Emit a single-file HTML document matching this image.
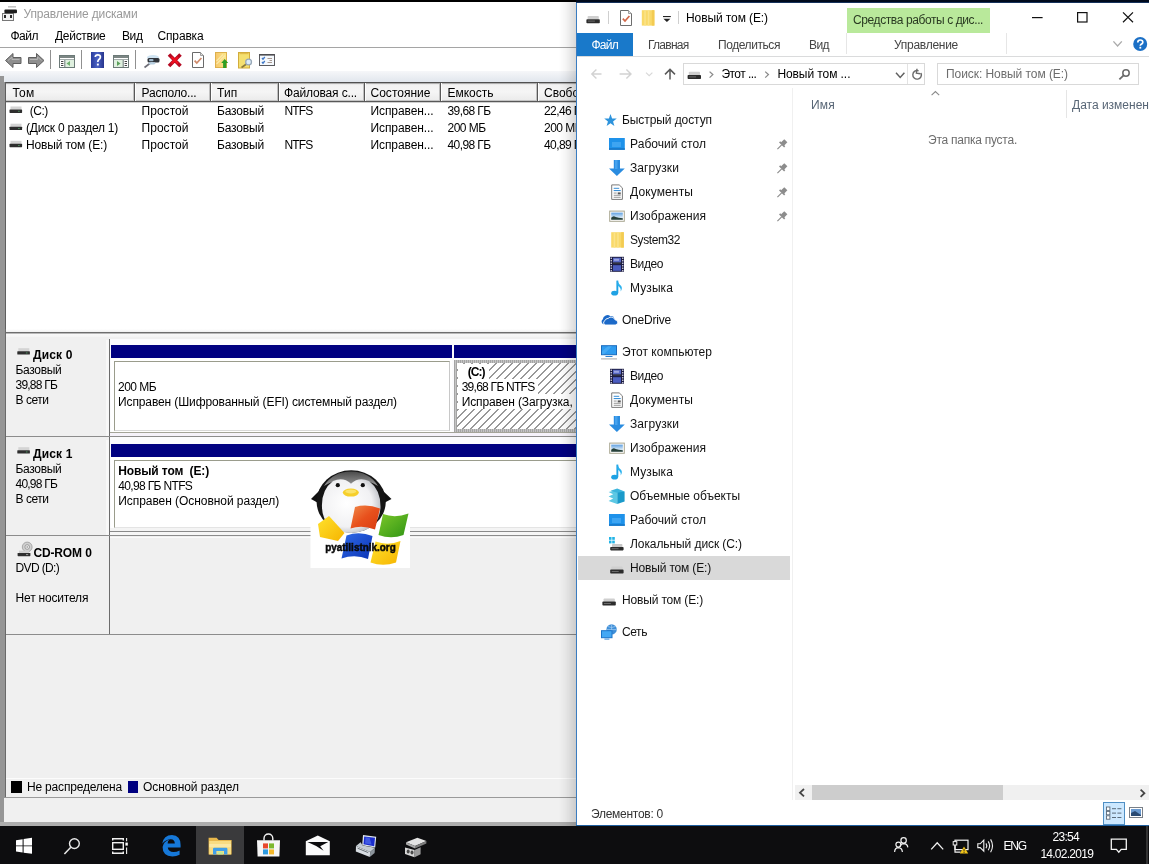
<!DOCTYPE html>
<html><head><meta charset="utf-8"><title>screen</title>
<style>
html,body{margin:0;padding:0;}
body{width:1149px;height:864px;overflow:hidden;position:relative;background:#fff;font-family:"Liberation Sans",sans-serif;}
.r{position:absolute;display:block;}
.t{position:absolute;white-space:pre;font-family:"Liberation Sans",sans-serif;}
</style></head><body><div id="root" style="position:absolute;left:0;top:0;width:1149px;height:864px;will-change:transform;overflow:hidden;">
<div class="r" style="left:0px;top:0px;width:1149px;height:2px;background:#000;"></div>
<div class="r" style="left:576px;top:0px;width:573px;height:2px;background:#000a1c;"></div>
<div class="r" style="left:0px;top:2px;width:577px;height:70px;background:#fff;"></div>
<span class="t" style="left:23.5px;top:7px;font-size:12px;line-height:14px;color:#999;letter-spacing:-0.161px;">Управление дисками</span>
<span class="t" style="left:10.5px;top:29px;font-size:12px;line-height:14px;color:#000;letter-spacing:-0.504px;">Файл</span>
<span class="t" style="left:55px;top:29px;font-size:12px;line-height:14px;color:#000;letter-spacing:-0.283px;">Действие</span>
<span class="t" style="left:122px;top:29px;font-size:12px;line-height:14px;color:#000;letter-spacing:-0.406px;">Вид</span>
<span class="t" style="left:157.5px;top:29px;font-size:12px;line-height:14px;color:#000;letter-spacing:-0.154px;">Справка</span>
<div class="r" style="left:0px;top:47px;width:577px;height:1px;background:#a5a5a5;"></div>
<div class="r" style="left:50px;top:50px;width:1px;height:19px;background:#909090;"></div>
<div class="r" style="left:81px;top:50px;width:1px;height:19px;background:#909090;"></div>
<div class="r" style="left:135px;top:50px;width:1px;height:19px;background:#909090;"></div>
<div class="r" style="left:0px;top:71px;width:577px;height:12px;background:linear-gradient(#f6f7f9,#dfe5ec);"></div>
<div class="r" style="left:0px;top:76px;width:5px;height:750px;background:#969696;"></div>
<div class="r" style="left:4px;top:76px;width:1px;height:6px;background:#e8ecf0;"></div>
<div class="r" style="left:5px;top:82px;width:572px;height:249px;background:#fff;"></div>
<div class="r" style="left:5px;top:82px;width:572px;height:1px;background:#505050;"></div>
<div class="r" style="left:5px;top:82px;width:1px;height:249px;background:#5e5e5e;"></div>
<div class="r" style="left:6px;top:83px;width:571px;height:18px;background:linear-gradient(#909090 0,#f2f2f2 9%,#f5f5f5 50%,#ececec 92%,#b0b0b0 100%);"></div>
<div class="r" style="left:6px;top:101px;width:571px;height:1px;background:#585858;"></div>
<div class="r" style="left:6px;top:102px;width:571px;height:1px;background:#d0d0d0;"></div>
<div class="r" style="left:133px;top:84px;width:1px;height:17px;background:#c0c0c0;"></div>
<div class="r" style="left:134px;top:83px;width:1px;height:18px;background:#585858;"></div>
<div class="r" style="left:135px;top:83px;width:1px;height:18px;background:#fdfdfd;"></div>
<div class="r" style="left:209px;top:84px;width:1px;height:17px;background:#c0c0c0;"></div>
<div class="r" style="left:210px;top:83px;width:1px;height:18px;background:#585858;"></div>
<div class="r" style="left:211px;top:83px;width:1px;height:18px;background:#fdfdfd;"></div>
<div class="r" style="left:277px;top:84px;width:1px;height:17px;background:#c0c0c0;"></div>
<div class="r" style="left:278px;top:83px;width:1px;height:18px;background:#585858;"></div>
<div class="r" style="left:279px;top:83px;width:1px;height:18px;background:#fdfdfd;"></div>
<div class="r" style="left:363px;top:84px;width:1px;height:17px;background:#c0c0c0;"></div>
<div class="r" style="left:364px;top:83px;width:1px;height:18px;background:#585858;"></div>
<div class="r" style="left:365px;top:83px;width:1px;height:18px;background:#fdfdfd;"></div>
<div class="r" style="left:439px;top:84px;width:1px;height:17px;background:#c0c0c0;"></div>
<div class="r" style="left:440px;top:83px;width:1px;height:18px;background:#585858;"></div>
<div class="r" style="left:441px;top:83px;width:1px;height:18px;background:#fdfdfd;"></div>
<div class="r" style="left:536px;top:84px;width:1px;height:17px;background:#c0c0c0;"></div>
<div class="r" style="left:537px;top:83px;width:1px;height:18px;background:#585858;"></div>
<div class="r" style="left:538px;top:83px;width:1px;height:18px;background:#fdfdfd;"></div>
<span class="t" style="left:12.5px;top:86px;font-size:12px;line-height:14px;color:#000;letter-spacing:0.224px;">Том</span>
<span class="t" style="left:141.5px;top:86px;font-size:12px;line-height:14px;color:#000;letter-spacing:-0.200px;">Располо...</span>
<span class="t" style="left:217px;top:86px;font-size:12px;line-height:14px;color:#000;letter-spacing:0.161px;">Тип</span>
<span class="t" style="left:284px;top:86px;font-size:12px;line-height:14px;color:#000;letter-spacing:-0.159px;">Файловая с...</span>
<span class="t" style="left:370.5px;top:86px;font-size:12px;line-height:14px;color:#000;letter-spacing:0.012px;">Состояние</span>
<span class="t" style="left:447.5px;top:86px;font-size:12px;line-height:14px;color:#000;letter-spacing:-0.009px;">Емкость</span>
<span class="t" style="left:544px;top:86px;font-size:12px;line-height:14px;color:#000;">Свобод</span>
<span class="t" style="left:29.8px;top:104px;font-size:12px;line-height:14px;color:#000;letter-spacing:-0.500px;">(C:)</span>
<span class="t" style="left:141.5px;top:104px;font-size:12px;line-height:14px;color:#000;letter-spacing:0.040px;">Простой</span>
<span class="t" style="left:217px;top:104px;font-size:12px;line-height:14px;color:#000;letter-spacing:-0.167px;">Базовый</span>
<span class="t" style="left:284.5px;top:104px;font-size:12px;line-height:14px;color:#000;letter-spacing:-0.836px;">NTFS</span>
<span class="t" style="left:370.5px;top:104px;font-size:12px;line-height:14px;color:#000;letter-spacing:-0.092px;">Исправен...</span>
<span class="t" style="left:447.5px;top:104px;font-size:12px;line-height:14px;color:#000;letter-spacing:-0.594px;">39,68 ГБ</span>
<span class="t" style="left:544px;top:104px;font-size:12px;line-height:14px;color:#000;letter-spacing:-0.594px;">22,46 ГБ</span>
<span class="t" style="left:26px;top:121px;font-size:12px;line-height:14px;color:#000;letter-spacing:-0.244px;">(Диск 0 раздел 1)</span>
<span class="t" style="left:141.5px;top:121px;font-size:12px;line-height:14px;color:#000;letter-spacing:0.040px;">Простой</span>
<span class="t" style="left:217px;top:121px;font-size:12px;line-height:14px;color:#000;letter-spacing:-0.167px;">Базовый</span>
<span class="t" style="left:370.5px;top:121px;font-size:12px;line-height:14px;color:#000;letter-spacing:-0.092px;">Исправен...</span>
<span class="t" style="left:447.5px;top:121px;font-size:12px;line-height:14px;color:#000;letter-spacing:-0.539px;">200 МБ</span>
<span class="t" style="left:544px;top:121px;font-size:12px;line-height:14px;color:#000;letter-spacing:-0.539px;">200 МБ</span>
<span class="t" style="left:26px;top:138px;font-size:12px;line-height:14px;color:#000;letter-spacing:-0.166px;">Новый том (E:)</span>
<span class="t" style="left:141.5px;top:138px;font-size:12px;line-height:14px;color:#000;letter-spacing:0.040px;">Простой</span>
<span class="t" style="left:217px;top:138px;font-size:12px;line-height:14px;color:#000;letter-spacing:-0.167px;">Базовый</span>
<span class="t" style="left:284.5px;top:138px;font-size:12px;line-height:14px;color:#000;letter-spacing:-0.836px;">NTFS</span>
<span class="t" style="left:370.5px;top:138px;font-size:12px;line-height:14px;color:#000;letter-spacing:-0.092px;">Исправен...</span>
<span class="t" style="left:447.5px;top:138px;font-size:12px;line-height:14px;color:#000;letter-spacing:-0.594px;">40,98 ГБ</span>
<span class="t" style="left:544px;top:138px;font-size:12px;line-height:14px;color:#000;letter-spacing:-0.594px;">40,89 ГБ</span>
<div class="r" style="left:6px;top:329px;width:571px;height:8px;background:linear-gradient(#fff 0,#f4f4f4 30%,#e8e8e8 45%,#f8f8f8 62%,#f4f4f4 100%);"></div>
<div class="r" style="left:5px;top:332px;width:572px;height:1px;background:#6e6e6e;"></div>
<div class="r" style="left:5px;top:333px;width:572px;height:1px;background:#b8b8b8;"></div>
<div class="r" style="left:5px;top:337px;width:572px;height:441px;background:#f0f0f0;"></div>
<div class="r" style="left:5px;top:329px;width:1px;height:469px;background:#6a6a6a;"></div>
<div class="r" style="left:110px;top:339px;width:467px;height:198px;background:#fbfbfd;"></div>
<div class="r" style="left:106px;top:340px;width:3px;height:97px;background:#f8f8f8;"></div>
<div class="r" style="left:109px;top:339px;width:1px;height:296px;background:#6c6c6c;"></div>
<div class="r" style="left:6px;top:436px;width:571px;height:1px;background:#8c8c8c;"></div>
<div class="r" style="left:110px;top:432px;width:467px;height:1px;background:#a4a498;"></div>
<div class="r" style="left:110px;top:433px;width:467px;height:3px;background:#f5f2fa;"></div>
<span class="t" style="left:33px;top:348px;font-size:12px;line-height:14px;color:#000;letter-spacing:0.146px;font-weight:bold;">Диск 0</span>
<span class="t" style="left:15.5px;top:363px;font-size:12px;line-height:14px;color:#000;letter-spacing:-0.310px;">Базовый</span>
<span class="t" style="left:15.5px;top:378px;font-size:12px;line-height:14px;color:#000;letter-spacing:-0.781px;">39,88 ГБ</span>
<span class="t" style="left:15.5px;top:393px;font-size:12px;line-height:14px;color:#000;letter-spacing:-0.469px;">В сети</span>
<div class="r" style="left:111px;top:345px;width:341px;height:13px;background:#000080;"></div>
<div class="r" style="left:111px;top:358px;width:341px;height:74px;background:#fff;"></div>
<div class="r" style="left:114px;top:361px;width:336px;height:70px;background:transparent;border:1px solid #9a9c8c;border-right-color:#c8c8c8;border-bottom-color:#d8d8d8;box-sizing:border-box;"></div>
<span class="t" style="left:118px;top:380px;font-size:12px;line-height:14px;color:#000;letter-spacing:-0.539px;">200 МБ</span>
<span class="t" style="left:118px;top:395px;font-size:12px;line-height:14px;color:#000;letter-spacing:-0.113px;">Исправен (Шифрованный (EFI) системный раздел)</span>
<div class="r" style="left:454px;top:345px;width:123px;height:13px;background:#000080;"></div>
<div class="r" style="left:454px;top:358px;width:123px;height:74px;background:#fff;"></div>
<div class="r" style="left:454px;top:360px;width:123px;height:72px;background:#b4b4b4;background:repeating-linear-gradient(90deg,#a4a4a4 0,#a4a4a4 1px,#c4c4c4 1px,#c4c4c4 2px);"></div>
<div class="r" style="left:457px;top:363px;width:120px;height:66px;background:#fff;background:repeating-linear-gradient(135deg,#fff 0,#fff 4.9px,#989898 4.9px,#989898 5.657px);"></div>
<div class="r" style="left:458px;top:364px;width:31px;height:15px;background:#fff;"></div>
<div class="r" style="left:458px;top:379px;width:80px;height:15px;background:#fff;"></div>
<div class="r" style="left:458px;top:394px;width:119px;height:15px;background:#fff;"></div>
<span class="t" style="left:467.8px;top:365px;font-size:12px;line-height:14px;color:#000;letter-spacing:-0.964px;font-weight:bold;">(C:)</span>
<span class="t" style="left:461.7px;top:380px;font-size:12px;line-height:14px;color:#000;letter-spacing:-0.739px;">39,68 ГБ NTFS</span>
<span class="t" style="left:461.7px;top:395px;font-size:12px;line-height:14px;color:#000;letter-spacing:-0.12px;">Исправен (Загрузка, ф</span>
<div class="r" style="left:106px;top:440px;width:3px;height:96px;background:#f8f8f8;"></div>
<div class="r" style="left:6px;top:535px;width:571px;height:1px;background:#8c8c8c;"></div>
<div class="r" style="left:110px;top:528px;width:467px;height:3px;background:#f4f4f4;"></div>
<div class="r" style="left:110px;top:531px;width:467px;height:1px;background:#8a8a8a;"></div>
<div class="r" style="left:110px;top:532px;width:467px;height:3px;background:#f6f6f6;"></div>
<span class="t" style="left:33px;top:447px;font-size:12px;line-height:14px;color:#000;letter-spacing:0.146px;font-weight:bold;">Диск 1</span>
<span class="t" style="left:15.5px;top:462px;font-size:12px;line-height:14px;color:#000;letter-spacing:-0.310px;">Базовый</span>
<span class="t" style="left:15.5px;top:477px;font-size:12px;line-height:14px;color:#000;letter-spacing:-0.781px;">40,98 ГБ</span>
<span class="t" style="left:15.5px;top:492px;font-size:12px;line-height:14px;color:#000;letter-spacing:-0.469px;">В сети</span>
<div class="r" style="left:111px;top:444px;width:466px;height:13px;background:#000080;"></div>
<div class="r" style="left:111px;top:457px;width:466px;height:71px;background:#fff;"></div>
<div class="r" style="left:114px;top:460px;width:463px;height:68px;background:transparent;border:1px solid #9a9c8c;border-right:0;border-bottom-color:#e4e4e4;box-sizing:border-box;"></div>
<span class="t" style="left:118.2px;top:464px;font-size:12px;line-height:14px;color:#000;letter-spacing:-0.123px;font-weight:bold;">Новый том  (E:)</span>
<span class="t" style="left:118.2px;top:479px;font-size:12px;line-height:14px;color:#000;letter-spacing:-0.647px;">40,98 ГБ NTFS</span>
<span class="t" style="left:118.2px;top:494px;font-size:12px;line-height:14px;color:#000;letter-spacing:-0.055px;">Исправен (Основной раздел)</span>
<div class="r" style="left:110px;top:536px;width:467px;height:99px;background:#f0f0f0;"></div>
<div class="r" style="left:110px;top:537px;width:467px;height:1px;background:#fafafa;"></div>
<div class="r" style="left:6px;top:634px;width:571px;height:1px;background:#8c8c8c;"></div>
<span class="t" style="left:33.4px;top:546px;font-size:12px;line-height:14px;color:#000;letter-spacing:-0.130px;font-weight:bold;">CD-ROM 0</span>
<span class="t" style="left:15.6px;top:561px;font-size:12px;line-height:14px;color:#000;letter-spacing:-0.646px;">DVD (D:)</span>
<span class="t" style="left:15.6px;top:591px;font-size:12px;line-height:14px;color:#000;letter-spacing:-0.193px;">Нет носителя</span>
<div class="r" style="left:6px;top:778px;width:571px;height:19px;background:#f0f0f0;"></div>
<div class="r" style="left:6px;top:778px;width:571px;height:1px;background:#fcfcfc;"></div>
<div class="r" style="left:11px;top:781px;width:11px;height:12px;background:#000;"></div>
<span class="t" style="left:27px;top:780px;font-size:12px;line-height:14px;color:#000;letter-spacing:-0.191px;">Не распределена</span>
<div class="r" style="left:128px;top:781px;width:10px;height:12px;background:#000080;"></div>
<span class="t" style="left:143px;top:780px;font-size:12px;line-height:14px;color:#000;letter-spacing:-0.072px;">Основной раздел</span>
<div class="r" style="left:5px;top:797px;width:572px;height:1px;background:#9a9a9a;"></div>
<div class="r" style="left:4px;top:798px;width:573px;height:24px;background:#f0f0f0;"></div>
<div class="r" style="left:0px;top:822px;width:577px;height:4px;background:#adadad;"></div>
<svg class="r" style="left:0px;top:0px" width="577" height="700" viewBox="0 0 577 700"><rect x="8" y="6" width="8" height="1.6" fill="#c4c4c4"/><rect x="2.5" y="13.5" width="11" height="7" fill="#f2f2f2" stroke="#777" stroke-width="1"/><rect x="4" y="15" width="2" height="3" fill="#2a2a2a"/><rect x="10" y="15" width="2" height="3" fill="#2a2a2a"/><rect x="4.4" y="9.4" width="12.6" height="3.8" rx="1" fill="#1e1e1e"/><path d="M5.5,60.5 L13,53.5 L13,57.5 L21,57.5 L21,63.5 L13,63.5 L13,67.5 Z" fill="#8e8e8e" stroke="#5e5e5e" stroke-width="1"/><path d="M8,60.5 L12,57 L12,59.5 L19.5,59.5" fill="none" stroke="#b4b4b4" stroke-width="1"/><path d="M44,60.5 L36.5,53.5 L36.5,57.5 L28.5,57.5 L28.5,63.5 L36.5,63.5 L36.5,67.5 Z" fill="#8e8e8e" stroke="#5e5e5e" stroke-width="1"/><path d="M30,59.5 L37.5,59.5 L37.5,57 L41.5,60.5" fill="none" stroke="#b4b4b4" stroke-width="1"/><rect x="59.5" y="55.5" width="15" height="12" fill="#fff" stroke="#6c7a78" stroke-width="1"/><rect x="60" y="56" width="14" height="2" fill="#7c8684"/><rect x="60" y="59" width="14" height="0.8" fill="#8c9896"/><rect x="65" y="60" width="9" height="7" fill="#dff0df"/><rect x="64.3" y="60" width="1" height="7" fill="#6c7a78"/><path d="M70,61 L70,66 L66.5,63.5 Z" fill="#6fb06f"/><rect x="61" y="61" width="2.4" height="1" fill="#444"/><rect x="61" y="63" width="2.4" height="1" fill="#444"/><rect x="61" y="65" width="2.4" height="1" fill="#444"/><defs><linearGradient id="hg" x1="0" x2="1"><stop offset="0" stop-color="#2a3c9c"/><stop offset=".5" stop-color="#4a62c4"/><stop offset="1" stop-color="#27358c"/></linearGradient></defs><rect x="91" y="52" width="13" height="16" fill="url(#hg)"/><path d="M95.3,57 Q95.3,54.8 97.8,54.8 Q100.4,54.8 100.4,57 Q100.4,58.6 98.6,59.8 Q97.8,60.6 97.8,62" fill="none" stroke="#fff" stroke-width="1.7"/><rect x="96.9" y="63.6" width="1.9" height="1.9" fill="#fff"/><rect x="113.5" y="55.5" width="15" height="12" fill="#fff" stroke="#6c7a78" stroke-width="1"/><rect x="114" y="56" width="14" height="2" fill="#7c8684"/><rect x="114" y="59" width="14" height="0.8" fill="#8c9896"/><rect x="114" y="60" width="9" height="7" fill="#dff0df"/><rect x="122.7" y="60" width="1" height="7" fill="#6c7a78"/><path d="M117,61 L117,66 L120.5,63.5 Z" fill="#5aa05a"/><rect x="124.6" y="61" width="2.4" height="1" fill="#444"/><rect x="124.6" y="63" width="2.4" height="1" fill="#444"/><rect x="124.6" y="65" width="2.4" height="1" fill="#444"/><path d="M144.5,67.5 L151,62.5" stroke="#6e6e78" stroke-width="1.6" fill="none"/><ellipse cx="153" cy="57.5" rx="6" ry="2.6" fill="#cfe3f1"/><rect x="147.5" y="58" width="12" height="4.4" rx="1.5" fill="#30343a"/><rect x="149" y="59" width="4.5" height="2.2" rx="1" fill="#9fb8cc"/><ellipse cx="152" cy="63.3" rx="3.5" ry="1.2" fill="#b8cfe0"/><path d="M169.0,54.5 L180.5,66.0 M180.5,54.5 L169.0,66.0" stroke="#b50a22" stroke-width="3.6" fill="none"/><path d="M171.5,57.0 L178.0,63.5 M178.0,57.0 L171.5,63.5" stroke="#f01020" stroke-width="2" fill="none"/><path d="M192.5,52.5 L200.5,52.5 L203.5,55.5 L203.5,67.5 L192.5,67.5 Z" fill="#fff" stroke="#6a6a6a" stroke-width="1"/><path d="M200.5,52.5 L200.5,55.5 L203.5,55.5" fill="#ddd" stroke="#8a8a8a" stroke-width="0.8"/><path d="M194.6,60.6 L196.8,63 L201.4,58" fill="none" stroke="#cf8a6a" stroke-width="1.7"/><defs><linearGradient id="fg1" x1="0" x2="1"><stop offset="0" stop-color="#f7c66a"/><stop offset="1" stop-color="#fbe88a"/></linearGradient></defs><rect x="215.5" y="52.5" width="11" height="15" fill="url(#fg1)" stroke="#ddb04c" stroke-width="1"/><path d="M216.5,61 L223,54.5 M216.5,64 L225,55.5" stroke="#fbe9a8" stroke-width="1.2" fill="none"/><path d="M224.7,59 L228.2,63 L226.3,63 L226.3,68 L223.1,68 L223.1,63 L221.2,63 Z" fill="#2f9e24"/><rect x="238.5" y="52.5" width="11" height="15.5" fill="#f4e070" stroke="#d2ac3c" stroke-width="1"/><rect x="239.5" y="53" width="9" height="1.2" fill="#e2bc4a"/><path d="M241.5,67.5 L246.5,64" stroke="#8c7a3a" stroke-width="1.6" fill="none"/><circle cx="248.6" cy="62" r="2.9" fill="#dcecf8" stroke="#98a8b8" stroke-width="1.3"/><rect x="259.5" y="54.5" width="15" height="11" fill="#f4f8fc" stroke="#5a5a5e" stroke-width="1"/><rect x="259.5" y="54" width="15" height="1.6" fill="#4c4c50"/><path d="M262,58 L263,59.2 L264.8,57" stroke="#3f77c8" stroke-width="1.3" fill="none"/><path d="M262,62 L263,63.2 L264.8,61" stroke="#3f77c8" stroke-width="1.3" fill="none"/><rect x="267.5" y="58" width="4.5" height="1" fill="#a89890"/><rect x="269.5" y="60" width="2.5" height="1" fill="#a89890"/><rect x="267.5" y="62" width="4.5" height="1" fill="#a89890"/><rect x="10.5" y="106.5" width="11" height="3.2" fill="#d4d4d4"/><rect x="9.5" y="109.5" width="12.6" height="3.4" rx="0.6" fill="#2e2e2e"/><rect x="18.1" y="110.8" width="1.6" height="0.9" fill="#4f9a62"/><rect x="10.5" y="123.7" width="11" height="3.2" fill="#d4d4d4"/><rect x="9.5" y="126.7" width="12.6" height="3.4" rx="0.6" fill="#2e2e2e"/><rect x="18.1" y="128.0" width="1.6" height="0.9" fill="#4f9a62"/><rect x="10.5" y="140.8" width="11" height="3.2" fill="#d4d4d4"/><rect x="9.5" y="143.8" width="12.6" height="3.4" rx="0.6" fill="#2e2e2e"/><rect x="18.1" y="145.10000000000002" width="1.6" height="0.9" fill="#4f9a62"/><rect x="18.3" y="348.2" width="11" height="3.2" fill="#d4d4d4"/><rect x="17.3" y="351.2" width="12.6" height="3.4" rx="0.6" fill="#2e2e2e"/><rect x="25.9" y="352.5" width="1.6" height="0.9" fill="#4f9a62"/><rect x="18.3" y="447.2" width="11" height="3.2" fill="#d4d4d4"/><rect x="17.3" y="450.2" width="12.6" height="3.4" rx="0.6" fill="#2e2e2e"/><rect x="25.9" y="451.5" width="1.6" height="0.9" fill="#4f9a62"/><circle cx="27.200000000000003" cy="547" r="4.9" fill="#d0d0d0" stroke="#9a9a9a" stroke-width="0.8"/><circle cx="27.200000000000003" cy="547" r="2.3" fill="#eee" stroke="#8c8c8c" stroke-width="0.8"/><circle cx="27.200000000000003" cy="547" r="0.8" fill="#888"/><rect x="19.0" y="550.6" width="10" height="2.6" fill="#d0d0d0"/><rect x="17.6" y="553" width="12.8" height="3.2" rx="0.6" fill="#2e2e2e"/><rect x="26.0" y="554.1" width="2.2" height="1" fill="#9a9a9a"/><defs><radialGradient id="pb" cx=".42" cy=".45" r=".62"><stop offset="0" stop-color="#ffffff"/><stop offset=".7" stop-color="#f1f1f3"/><stop offset="1" stop-color="#b9bcc2"/></radialGradient><linearGradient id="ph" x1="0" y1="0" x2="0" y2="1"><stop offset="0" stop-color="#4a4a4a"/><stop offset="1" stop-color="#9a9a9a"/></linearGradient><linearGradient id="pr" x1="0" y1="0" x2="1" y2="1"><stop offset="0" stop-color="#f08a4a"/><stop offset=".5" stop-color="#e8501c"/><stop offset="1" stop-color="#d83a10"/></linearGradient><linearGradient id="pgn" x1="0" y1="0" x2="1" y2="1"><stop offset="0" stop-color="#7cc82a"/><stop offset="1" stop-color="#2f9414"/></linearGradient><linearGradient id="pbl" x1="0" y1="0" x2="1" y2="1"><stop offset="0" stop-color="#2f6ae8"/><stop offset="1" stop-color="#0c34b4"/></linearGradient><linearGradient id="py" x1="0" y1="0" x2="1" y2="1"><stop offset="0" stop-color="#ffe22e"/><stop offset="1" stop-color="#f6b400"/></linearGradient></defs><rect x="310.5" y="463" width="99.5" height="105" fill="#fff"/><path d="M321,489 L311,499 L320,504 Z" fill="#111"/><path d="M381,489 L391.5,499 L382,504 Z" fill="#111"/><ellipse cx="351.2" cy="501.5" rx="34.6" ry="31.2" fill="#151515"/><path d="M324,486 Q333,471.5 351,471.5 Q369,471.5 378,486 Q364,477 351,483.5 Q338,477 324,486 Z" fill="url(#ph)"/><path d="M322,508 Q321,490 333,481 Q343,476.5 351,483.5 Q359,476.5 369,481 Q381,490 380.5,508 Q379,531 351,533 Q323,531 322,508 Z" fill="url(#pb)"/><circle cx="337.8" cy="485.2" r="2.1" fill="#111"/><circle cx="362.8" cy="485.2" r="2.1" fill="#111"/><ellipse cx="350.8" cy="492.6" rx="8" ry="4" fill="#f6cf2a"/><ellipse cx="350.8" cy="491.4" rx="5.5" ry="2" fill="#fbe36a"/><path d="M318,524 L329,516 L344.5,533 L338,541 L320,537 Z" fill="url(#py)"/><path d="M355,507 Q367,503.5 380,508.5 L375,529.5 Q362,524.5 350.5,528.5 Z" fill="url(#pr)"/><path d="M383,514 Q395,518.5 408.5,513.5 L403.5,535 Q391,539.5 378.5,535 Z" fill="url(#pgn)"/><path d="M346.5,535.5 Q359,531 372.5,536 L368,559 Q355,554 341.5,558.5 Z" fill="url(#pbl)"/><path d="M375.5,541.5 Q388,546 400.5,541 L396,562.5 Q383,567 370.5,562.5 Z" fill="url(#py)"/><g transform="translate(325.2,551.4) scale(1,0.78)"><text x="0" y="0" font-family="Liberation Sans, sans-serif" font-weight="bold" font-size="15" textLength="70.6" lengthAdjust="spacingAndGlyphs" fill="#0a0a0a" stroke="#0a0a0a" stroke-width="0.7">pyatilistnik.org</text></g></svg>
<div class="r" style="left:559px;top:2px;width:17px;height:824px;background:linear-gradient(90deg,rgba(0,0,0,0) 0,rgba(0,0,0,0.04) 40%,rgba(0,0,0,0.15) 100%);"></div>
<div class="r" style="left:576px;top:2px;width:573px;height:824px;background:#fff;"></div>
<div class="r" style="left:576px;top:2px;width:1px;height:824px;background:#3a7cc0;"></div>
<div class="r" style="left:576px;top:825px;width:573px;height:1px;background:#1f5f9f;"></div>
<div class="r" style="left:576px;top:2px;width:573px;height:1px;background:#16325c;"></div>
<span class="t" style="left:686px;top:11px;font-size:12px;line-height:14px;color:#000;letter-spacing:-0.095px;">Новый том (E:)</span>
<div class="r" style="left:847px;top:8px;width:143px;height:25px;background:#b9e99b;"></div>
<span class="t" style="left:853px;top:13px;font-size:12px;line-height:14px;color:#2a3a22;letter-spacing:-0.401px;">Средства работы с дис...</span>
<div class="r" style="left:577px;top:33px;width:56px;height:23px;background:#1979ca;"></div>
<span class="t" style="left:591.5px;top:38px;font-size:12px;line-height:14px;color:#fff;letter-spacing:-0.754px;">Файл</span>
<span class="t" style="left:648px;top:38px;font-size:12px;line-height:14px;color:#444;letter-spacing:-0.741px;">Главная</span>
<span class="t" style="left:718px;top:38px;font-size:12px;line-height:14px;color:#444;letter-spacing:-0.427px;">Поделиться</span>
<span class="t" style="left:809px;top:38px;font-size:12px;line-height:14px;color:#444;letter-spacing:-0.573px;">Вид</span>
<span class="t" style="left:894px;top:38px;font-size:12px;line-height:14px;color:#444;letter-spacing:-0.272px;">Управление</span>
<div class="r" style="left:577px;top:56px;width:572px;height:1px;background:#dadbdc;"></div>
<div class="r" style="left:846px;top:33px;width:1px;height:21px;background:#e6e6e6;"></div>
<div class="r" style="left:1006px;top:33px;width:1px;height:21px;background:#e6e6e6;"></div>
<div class="r" style="left:683px;top:63px;width:242px;height:22px;background:#fff;border:1px solid #d9d9d9;box-sizing:border-box;"></div>
<div class="r" style="left:907px;top:64px;width:1px;height:20px;background:#e3e3e3;"></div>
<span class="t" style="left:721.4px;top:67px;font-size:12px;line-height:14px;color:#000;letter-spacing:-0.529px;">Этот ...</span>
<span class="t" style="left:777.4px;top:67px;font-size:12px;line-height:14px;color:#000;letter-spacing:-0.077px;">Новый том ...</span>
<div class="r" style="left:937px;top:63px;width:202px;height:22px;background:#fff;border:1px solid #d9d9d9;box-sizing:border-box;"></div>
<span class="t" style="left:946px;top:67px;font-size:12px;line-height:14px;color:#6d6d6d;letter-spacing:-0.060px;">Поиск: Новый том (E:)</span>
<div class="r" style="left:792px;top:88px;width:1px;height:712px;background:#f0f0f0;"></div>
<div class="r" style="left:578px;top:556px;width:212px;height:24px;background:#d9d9d9;"></div>
<span class="t" style="left:622px;top:113px;font-size:12px;line-height:14px;color:#111;letter-spacing:-0.081px;">Быстрый доступ</span>
<span class="t" style="left:630px;top:137px;font-size:12px;line-height:14px;color:#111;letter-spacing:0.056px;">Рабочий стол</span>
<span class="t" style="left:630px;top:161px;font-size:12px;line-height:14px;color:#111;letter-spacing:0.088px;">Загрузки</span>
<span class="t" style="left:630px;top:185px;font-size:12px;line-height:14px;color:#111;letter-spacing:0.127px;">Документы</span>
<span class="t" style="left:630px;top:209px;font-size:12px;line-height:14px;color:#111;letter-spacing:0.053px;">Изображения</span>
<span class="t" style="left:630px;top:233px;font-size:12px;line-height:14px;color:#111;letter-spacing:-0.420px;">System32</span>
<span class="t" style="left:630px;top:257px;font-size:12px;line-height:14px;color:#111;letter-spacing:-0.412px;">Видео</span>
<span class="t" style="left:630px;top:281px;font-size:12px;line-height:14px;color:#111;letter-spacing:0.091px;">Музыка</span>
<span class="t" style="left:622px;top:313px;font-size:12px;line-height:14px;color:#111;letter-spacing:-0.211px;">OneDrive</span>
<span class="t" style="left:622px;top:345px;font-size:12px;line-height:14px;color:#111;letter-spacing:0.019px;">Этот компьютер</span>
<span class="t" style="left:630px;top:369px;font-size:12px;line-height:14px;color:#111;letter-spacing:-0.412px;">Видео</span>
<span class="t" style="left:630px;top:393px;font-size:12px;line-height:14px;color:#111;letter-spacing:0.127px;">Документы</span>
<span class="t" style="left:630px;top:417px;font-size:12px;line-height:14px;color:#111;letter-spacing:0.088px;">Загрузки</span>
<span class="t" style="left:630px;top:441px;font-size:12px;line-height:14px;color:#111;letter-spacing:0.053px;">Изображения</span>
<span class="t" style="left:630px;top:465px;font-size:12px;line-height:14px;color:#111;letter-spacing:0.091px;">Музыка</span>
<span class="t" style="left:630px;top:489px;font-size:12px;line-height:14px;color:#111;letter-spacing:-0.021px;">Объемные объекты</span>
<span class="t" style="left:630px;top:513px;font-size:12px;line-height:14px;color:#111;letter-spacing:0.056px;">Рабочий стол</span>
<span class="t" style="left:630px;top:537px;font-size:12px;line-height:14px;color:#111;letter-spacing:-0.082px;">Локальный диск (C:)</span>
<span class="t" style="left:630px;top:561px;font-size:12px;line-height:14px;color:#111;letter-spacing:-0.166px;">Новый том (E:)</span>
<span class="t" style="left:622px;top:593px;font-size:12px;line-height:14px;color:#111;letter-spacing:-0.166px;">Новый том (E:)</span>
<span class="t" style="left:622px;top:625px;font-size:12px;line-height:14px;color:#111;letter-spacing:-0.426px;">Сеть</span>
<span class="t" style="left:811px;top:98px;font-size:12px;line-height:14px;color:#586676;letter-spacing:0.208px;">Имя</span>
<span class="t" style="left:1072px;top:98px;font-size:12px;line-height:14px;color:#586676;">Дата изменения</span>
<div class="r" style="left:1066px;top:90px;width:1px;height:28px;background:#e5e5e5;"></div>
<span class="t" style="left:928px;top:133px;font-size:12px;line-height:14px;color:#6d6d6d;letter-spacing:-0.245px;">Эта папка пуста.</span>
<div class="r" style="left:795px;top:785px;width:354px;height:15px;background:#f0f0f0;"></div>
<div class="r" style="left:812px;top:785px;width:191px;height:15px;background:#cdcdcd;"></div>
<span class="t" style="left:591px;top:807px;font-size:12px;line-height:14px;color:#333;letter-spacing:-0.268px;">Элементов: 0</span>
<div class="r" style="left:0px;top:826px;width:1149px;height:38px;background:#0d0d0f;"></div>
<div class="r" style="left:196px;top:826px;width:48px;height:38px;background:#3a3a3c;"></div>
<span class="t" style="left:1052.6px;top:830px;font-size:12px;line-height:14px;color:#fff;letter-spacing:-0.726px;">23:54</span>
<span class="t" style="left:1040.4px;top:847px;font-size:12px;line-height:14px;color:#fff;letter-spacing:-0.736px;">14.02.2019</span>
<span class="t" style="left:1003.6px;top:839px;font-size:12px;line-height:14px;color:#fff;letter-spacing:-1.272px;">ENG</span>
<svg class="r" style="left:577px;top:0px" width="572" height="826" viewBox="577 0 572 826"><rect x="587.6" y="16" width="11.2" height="3.4" rx="0.8" fill="#cfcfcf"/><rect x="586.4" y="19.2" width="13.4" height="4" rx="0.8" fill="#2c2c2c"/><rect x="587.9" y="20.6" width="7" height="1" fill="#6a6a6a"/><path d="M620.5,10.5 L628.5,10.5 L631.5,13.5 L631.5,25.5 L620.5,25.5 Z" fill="#fff" stroke="#6e6e6e" stroke-width="1"/><path d="M628.5,10.5 L628.5,13.5 L631.5,13.5" fill="#e4e4e4" stroke="#8a8a8a" stroke-width="0.8"/><path d="M622.8,18.6 L625,21 L629.4,16" fill="none" stroke="#d2694a" stroke-width="1.7"/><rect x="641.8" y="10.2" width="12.6" height="15.4" fill="#f9d969"/><rect x="651.8" y="10.2" width="2.6" height="15.4" fill="#f3cb52"/><rect x="644.3" y="10.2" width="1.5" height="15.4" fill="#fbe38a"/><rect x="647.8" y="10.2" width="1.5" height="15.4" fill="#fbe38a"/><rect x="663" y="16" width="7.8" height="1.1" fill="#222"/><path d="M663.4,18.8 L670.4,18.8 L666.9,22 Z" fill="#222"/><rect x="608" y="11" width="1" height="13" fill="#cfcfcf"/><rect x="678" y="11" width="1" height="13" fill="#cfcfcf"/><rect x="1032" y="17" width="10.6" height="1.2" fill="#111"/><rect x="1077.6" y="12.6" width="9.4" height="9.4" fill="none" stroke="#111" stroke-width="1.2"/><path d="M1123,12.4 L1133,22.2 M1133,12.4 L1123,22.2" stroke="#111" stroke-width="1.2"/><path d="M1113.4,41.4 L1117.6000000000001,46.0 L1121.8000000000002,41.4" fill="none" stroke="#ababab" stroke-width="1.4"/><circle cx="1140.2" cy="44" r="7" fill="#1c70c6"/><path d="M1137.8,42.4 Q1137.8,40 1140.2,40 Q1142.8,40 1142.8,42.2 Q1142.8,43.6 1141.0,44.4 Q1140.3,44.9 1140.3,45.8" fill="none" stroke="#fff" stroke-width="1.7"/><rect x="1139.4" y="46.8" width="1.8" height="1.8" fill="#fff"/><path d="M601.5,74 L591.8,74 M596.4,69.4 L591.8,74 L596.4,78.6" fill="none" stroke="#d2d2d2" stroke-width="1.4"/><path d="M619.6,74 L631.0,74 M626.4,69.4 L631.0,74 L626.4,78.6" fill="none" stroke="#d2d2d2" stroke-width="1.4"/><path d="M646,72.6 L649.2,75.6 L652.4,72.6" fill="none" stroke="#d8d8d8" stroke-width="1.2"/><path d="M670.0,79.6 L670.0,69.39999999999999 M665.0,74.39999999999999 L670.0,69.39999999999999 L675.0,74.39999999999999" fill="none" stroke="#5a5a5a" stroke-width="1.5"/><rect x="688.8000000000001" y="71.8" width="11.2" height="3.4" rx="0.8" fill="#cfcfcf"/><rect x="687.6" y="75.0" width="13.4" height="4" rx="0.8" fill="#2c2c2c"/><rect x="689.1" y="76.39999999999999" width="7" height="1" fill="#6a6a6a"/><path d="M709.6,71.6 L712.8000000000001,74.6 L709.6,77.6" fill="none" stroke="#8a8a8a" stroke-width="1.3"/><path d="M765.2,71.6 L768.4000000000001,74.6 L765.2,77.6" fill="none" stroke="#8a8a8a" stroke-width="1.3"/><path d="M896,72.8 L900.2,77.39999999999999 L904.4,72.8" fill="none" stroke="#606060" stroke-width="1.5"/><path d="M918.6,70.8 A4.3,4.3 0 1 0 921,73.0" fill="none" stroke="#6a6a6a" stroke-width="1.4"/><path d="M916.6,68.8 L916.6,73.19999999999999 L920.8,73.19999999999999" fill="none" stroke="#6a6a6a" stroke-width="1.4" transform="rotate(8 917 71.6)"/><circle cx="1126.0" cy="73.0" r="3.2" fill="none" stroke="#6a6a6a" stroke-width="1.5"/><path d="M1123.6,75.4 L1119.3999999999999,79.4" stroke="#6a6a6a" stroke-width="1.8"/><path d="M931.6,95.19999999999999 L935.4,91.6 L939.2,95.19999999999999" fill="none" stroke="#8a8a8a" stroke-width="1.1"/><polygon points="610.50,114.00 612.09,118.42 616.78,118.56 613.07,121.43 614.38,125.94 610.50,123.30 606.62,125.94 607.93,121.43 604.22,118.56 608.91,118.42" fill="#2d93dc"/><rect x="609" y="138" width="15.8" height="11.8" fill="#1e92ea"/><rect x="609" y="148.2" width="15.8" height="1.6" fill="#1877c8"/><rect x="612" y="142" width="9" height="5" fill="#3ea5f2"/><path d="M613.8,160 L620,160 L620,168.4 L624.8,168.4 L616.9,176 L609,168.4 L613.8,168.4 Z" fill="#2a8ce0"/><rect x="615" y="160" width="2.5" height="9" fill="#45a2ee"/><path d="M611.7,184.9 L619.2,184.9 L622.4000000000001,187.9 L622.4000000000001,199.4 L611.7,199.4 Z" fill="#fff" stroke="#7c7c7c" stroke-width="1"/><rect x="613.7" y="187.8" width="5.5" height="1" fill="#3a90d8"/><rect x="613.7" y="190.0" width="7" height="1.1" fill="#3a90d8"/><rect x="613.7" y="192.6" width="3" height="0.9" fill="#8a8a8a"/><rect x="617.7" y="192.4" width="3" height="2" fill="#555"/><rect x="613.7" y="194.8" width="7" height="0.9" fill="#8a8a8a"/><rect x="613.7" y="196.8" width="7" height="0.9" fill="#8a8a8a"/><defs><linearGradient id="pg" x1="0" y1="0" x2="0" y2="1"><stop offset="0" stop-color="#5f9fe0"/><stop offset=".6" stop-color="#c8e0f4"/><stop offset="1" stop-color="#e8f0f0"/></linearGradient></defs><rect x="609.7" y="211.1" width="14.6" height="10.2" fill="#fff" stroke="#a8a690" stroke-width="1"/><rect x="611.2" y="212.6" width="11.6" height="7.2" fill="url(#pg)"/><path d="M611.2,217.79999999999998 Q613.2,215.2 615.7,217.0 Q618.2,217.79999999999998 622.8000000000001,218.2 L622.8000000000001,219.79999999999998 L611.2,219.79999999999998 Z" fill="#27403a"/><rect x="611.2" y="232.2" width="12.6" height="15.4" fill="#f9d969"/><rect x="621.2" y="232.2" width="2.6" height="15.4" fill="#f3cb52"/><rect x="613.7" y="232.2" width="1.5" height="15.4" fill="#fbe38a"/><rect x="617.2" y="232.2" width="1.5" height="15.4" fill="#fbe38a"/><rect x="610" y="256.8" width="14" height="15" fill="#1c1c44"/><rect x="613" y="257.8" width="8" height="6" fill="#5868c4"/><rect x="613" y="265.2" width="8" height="5.6" fill="#4a5cc0"/><rect x="614" y="258.8" width="5" height="2" fill="#9aa4e0"/><rect x="613" y="262.40000000000003" width="8" height="1.4" fill="#2a2a2a"/><rect x="610.6" y="257.6" width="1.3" height="1.3" fill="#e8e8f0"/><rect x="622.1" y="257.6" width="1.3" height="1.3" fill="#e8e8f0"/><rect x="610.6" y="260.1" width="1.3" height="1.3" fill="#e8e8f0"/><rect x="622.1" y="260.1" width="1.3" height="1.3" fill="#e8e8f0"/><rect x="610.6" y="262.6" width="1.3" height="1.3" fill="#e8e8f0"/><rect x="622.1" y="262.6" width="1.3" height="1.3" fill="#e8e8f0"/><rect x="610.6" y="265.1" width="1.3" height="1.3" fill="#e8e8f0"/><rect x="622.1" y="265.1" width="1.3" height="1.3" fill="#e8e8f0"/><rect x="610.6" y="267.6" width="1.3" height="1.3" fill="#e8e8f0"/><rect x="622.1" y="267.6" width="1.3" height="1.3" fill="#e8e8f0"/><rect x="610.6" y="270.1" width="1.3" height="1.3" fill="#e8e8f0"/><rect x="622.1" y="270.1" width="1.3" height="1.3" fill="#e8e8f0"/><ellipse cx="614.6" cy="293.20000000000005" rx="3.4" ry="2.4" fill="#1fa2e4"/><rect x="616.4000000000001" y="280.6" width="1.9" height="12.6" fill="#1fa2e4"/><path d="M617.4000000000001,280.6 Q618.7,284.20000000000005 621.2,286.0 Q622.8000000000001,288.20000000000005 620.6,291.6 Q621.6,288.20000000000005 617.4000000000001,285.6 Z" fill="#2cb2ee"/><g transform="translate(782,144.5) rotate(45)"><rect x="-2.2" y="-5.4" width="4.4" height="4.8" fill="#8c8c8c"/><rect x="-3.6" y="-1" width="7.2" height="1.6" fill="#8c8c8c"/><rect x="-0.6" y="0.5" width="1.2" height="6" fill="#8c8c8c"/></g><g transform="translate(782,168.5) rotate(45)"><rect x="-2.2" y="-5.4" width="4.4" height="4.8" fill="#8c8c8c"/><rect x="-3.6" y="-1" width="7.2" height="1.6" fill="#8c8c8c"/><rect x="-0.6" y="0.5" width="1.2" height="6" fill="#8c8c8c"/></g><g transform="translate(782,192.5) rotate(45)"><rect x="-2.2" y="-5.4" width="4.4" height="4.8" fill="#8c8c8c"/><rect x="-3.6" y="-1" width="7.2" height="1.6" fill="#8c8c8c"/><rect x="-0.6" y="0.5" width="1.2" height="6" fill="#8c8c8c"/></g><g transform="translate(782,216.5) rotate(45)"><rect x="-2.2" y="-5.4" width="4.4" height="4.8" fill="#8c8c8c"/><rect x="-3.6" y="-1" width="7.2" height="1.6" fill="#8c8c8c"/><rect x="-0.6" y="0.5" width="1.2" height="6" fill="#8c8c8c"/></g><path d="M603.6,324.20000000000005 A2.8,2.8 0 0 1 602.8,319.20000000000005 A4.6,4.6 0 0 1 610.4,316.20000000000005 A3.2,3.2 0 0 1 614.4,318.6 L614.4,324.20000000000005 Z" fill="#1b69c8"/><path d="M605.6,325.0 L615.2,325.0 A2.6,2.6 0 0 0 615,319.8 A4,4 0 0 0 608.2,318.40000000000003 A3.2,3.2 0 0 0 605,320.6 A2.3,2.3 0 0 0 605.6,325.0 Z" fill="#1b69c8" stroke="#fff" stroke-width="0.9"/><rect x="601.5" y="345.7" width="15" height="9" fill="#2e9cf0" stroke="#1b6cbc" stroke-width="1"/><path d="M602,351.2 L608,346.2 L612,346.2 L604,354.2 L602,354.2 Z" fill="#55b4f8" opacity=".6"/><rect x="605.5" y="356.0" width="7" height="1" fill="#2b7fd0"/><rect x="601" y="358.4" width="16" height="1" fill="#a8a8a8"/><rect x="610" y="368.8" width="14" height="15" fill="#1c1c44"/><rect x="613" y="369.8" width="8" height="6" fill="#5868c4"/><rect x="613" y="377.2" width="8" height="5.6" fill="#4a5cc0"/><rect x="614" y="370.8" width="5" height="2" fill="#9aa4e0"/><rect x="613" y="374.40000000000003" width="8" height="1.4" fill="#2a2a2a"/><rect x="610.6" y="369.6" width="1.3" height="1.3" fill="#e8e8f0"/><rect x="622.1" y="369.6" width="1.3" height="1.3" fill="#e8e8f0"/><rect x="610.6" y="372.1" width="1.3" height="1.3" fill="#e8e8f0"/><rect x="622.1" y="372.1" width="1.3" height="1.3" fill="#e8e8f0"/><rect x="610.6" y="374.6" width="1.3" height="1.3" fill="#e8e8f0"/><rect x="622.1" y="374.6" width="1.3" height="1.3" fill="#e8e8f0"/><rect x="610.6" y="377.1" width="1.3" height="1.3" fill="#e8e8f0"/><rect x="622.1" y="377.1" width="1.3" height="1.3" fill="#e8e8f0"/><rect x="610.6" y="379.6" width="1.3" height="1.3" fill="#e8e8f0"/><rect x="622.1" y="379.6" width="1.3" height="1.3" fill="#e8e8f0"/><rect x="610.6" y="382.1" width="1.3" height="1.3" fill="#e8e8f0"/><rect x="622.1" y="382.1" width="1.3" height="1.3" fill="#e8e8f0"/><path d="M611.7,392.9 L619.2,392.9 L622.4000000000001,395.9 L622.4000000000001,407.4 L611.7,407.4 Z" fill="#fff" stroke="#7c7c7c" stroke-width="1"/><rect x="613.7" y="395.79999999999995" width="5.5" height="1" fill="#3a90d8"/><rect x="613.7" y="398.0" width="7" height="1.1" fill="#3a90d8"/><rect x="613.7" y="400.59999999999997" width="3" height="0.9" fill="#8a8a8a"/><rect x="617.7" y="400.4" width="3" height="2" fill="#555"/><rect x="613.7" y="402.79999999999995" width="7" height="0.9" fill="#8a8a8a"/><rect x="613.7" y="404.79999999999995" width="7" height="0.9" fill="#8a8a8a"/><path d="M613.8,416 L620,416 L620,424.4 L624.8,424.4 L616.9,432 L609,424.4 L613.8,424.4 Z" fill="#2a8ce0"/><rect x="615" y="416" width="2.5" height="9" fill="#45a2ee"/><defs><linearGradient id="pg" x1="0" y1="0" x2="0" y2="1"><stop offset="0" stop-color="#5f9fe0"/><stop offset=".6" stop-color="#c8e0f4"/><stop offset="1" stop-color="#e8f0f0"/></linearGradient></defs><rect x="609.7" y="443.1" width="14.6" height="10.2" fill="#fff" stroke="#a8a690" stroke-width="1"/><rect x="611.2" y="444.6" width="11.6" height="7.2" fill="url(#pg)"/><path d="M611.2,449.8 Q613.2,447.20000000000005 615.7,449.0 Q618.2,449.8 622.8000000000001,450.20000000000005 L622.8000000000001,451.8 L611.2,451.8 Z" fill="#27403a"/><ellipse cx="614.6" cy="477.20000000000005" rx="3.4" ry="2.4" fill="#1fa2e4"/><rect x="616.4000000000001" y="464.6" width="1.9" height="12.6" fill="#1fa2e4"/><path d="M617.4000000000001,464.6 Q618.7,468.20000000000005 621.2,470.0 Q622.8000000000001,472.20000000000005 620.6,475.6 Q621.6,472.20000000000005 617.4000000000001,469.6 Z" fill="#2cb2ee"/><path d="M617.2,490.0 L624.6,491.6 L624.6,501.6 L617.2,504.0 Z" fill="#1a9aca"/><path d="M617.2,490.0 L608.6,492.0 L613.2,494.20000000000005 L608.6,496.40000000000003 L613.2,498.6 L608.6,501.0 L617.2,504.0 Z" fill="#5cc8e4"/><path d="M617.2,488.6 L624.6,491.6 L617.2,492.8 L610.6,490.8 Z" fill="#3ab4dc"/><rect x="609" y="514" width="15.8" height="11.8" fill="#1e92ea"/><rect x="609" y="524.2" width="15.8" height="1.6" fill="#1877c8"/><rect x="612" y="518" width="9" height="5" fill="#3ea5f2"/><rect x="609" y="537" width="2.5" height="2.8" fill="#22b4e6"/><rect x="612.2" y="537" width="2.6" height="2.8" fill="#22b4e6"/><rect x="609" y="540.6" width="2.5" height="2.8" fill="#22b4e6"/><rect x="612.2" y="540.6" width="2.6" height="2.8" fill="#22b4e6"/><rect x="612" y="544" width="10.4" height="3.2" rx="0.8" fill="#c8c8c8"/><rect x="610.2" y="547" width="13.4" height="3.4" rx="0.8" fill="#2c2c2c"/><rect x="611.6" y="548.2" width="7" height="1" fill="#6a6a6a"/><rect x="611.4000000000001" y="566.4" width="11.2" height="3.4" rx="0.8" fill="#cfcfcf"/><rect x="610.2" y="569.6" width="13.4" height="4" rx="0.8" fill="#2c2c2c"/><rect x="611.7" y="571.0" width="7" height="1" fill="#6a6a6a"/><rect x="603.6" y="598.4" width="11.2" height="3.4" rx="0.8" fill="#cfcfcf"/><rect x="602.4" y="601.6" width="13.4" height="4" rx="0.8" fill="#2c2c2c"/><rect x="603.9" y="603.0" width="7" height="1" fill="#6a6a6a"/><circle cx="611.6" cy="629.4000000000001" r="5.2" fill="#3f8fd8"/><path d="M608,626.6 Q611.5,628.6 615.6,626.4000000000001 M611.6,624.2 L611.6,634.6 M606.6,629.6 L616.8,629.6" stroke="#9cc8f0" stroke-width="0.8" fill="none"/><rect x="601.5" y="630.7" width="10.5" height="7" fill="#44a8f4" stroke="#1c74c8" stroke-width="1"/><rect x="604.4" y="638.6" width="5" height="1" fill="#3c8cd8"/><path d="M804,789 L800,792.7 L804,796.4" fill="none" stroke="#444" stroke-width="1.8"/><path d="M1140.6,789.6 L1144.4,793.2 L1140.6,796.8" fill="none" stroke="#444" stroke-width="1.8"/><rect x="1103.5" y="802.5" width="21" height="22" fill="#cce8ff" stroke="#4f8fc4" stroke-width="1"/><rect x="1106.5" y="807.0" width="3.4" height="3.4" fill="#fff" stroke="#5a6a7a" stroke-width="0.9"/><rect x="1112" y="808.2" width="4" height="1" fill="#5a6a7a"/><rect x="1117.4" y="808.2" width="4" height="1" fill="#5a6a7a"/><rect x="1106.5" y="811.4" width="3.4" height="3.4" fill="#fff" stroke="#5a6a7a" stroke-width="0.9"/><rect x="1112" y="812.6" width="4" height="1" fill="#5a6a7a"/><rect x="1117.4" y="812.6" width="4" height="1" fill="#5a6a7a"/><rect x="1106.5" y="815.8" width="3.4" height="3.4" fill="#fff" stroke="#5a6a7a" stroke-width="0.9"/><rect x="1112" y="817.0" width="4" height="1" fill="#5a6a7a"/><rect x="1117.4" y="817.0" width="4" height="1" fill="#5a6a7a"/><rect x="1129.5" y="807.5" width="13" height="10" fill="#fff" stroke="#7a8088" stroke-width="1"/><rect x="1131" y="809" width="10" height="7" fill="#6a9ad0"/><path d="M1131,813 L1135,811 L1141,815 L1141,816 L1131,816 Z" fill="#2a4a72"/></svg>
<svg class="r" style="left:0px;top:825px" width="1149" height="39" viewBox="0 825 1149 39"><path d="M16,840.1999999999999 L22.6,839.1999999999999 L22.6,845.4 L16,845.4 Z" fill="#fff"/><path d="M23.6,839.0 L32,837.8 L32,845.4 L23.6,845.4 Z" fill="#fff"/><path d="M16,846.3 L22.6,846.3 L22.6,852.5999999999999 L16,851.5999999999999 Z" fill="#fff"/><path d="M23.6,846.3 L32,846.3 L32,853.8 L23.6,852.6999999999999 Z" fill="#fff"/><circle cx="74.4" cy="843.6" r="4.9" fill="none" stroke="#e8e8e8" stroke-width="1.4"/><path d="M70.8,847.2 L64.4,854" stroke="#e8e8e8" stroke-width="1.5"/><rect x="112.7" y="842.7" width="10.6" height="6.6" fill="none" stroke="#f0f0f0" stroke-width="1.4"/><path d="M112,838.8 L124,838.8 M112,853.2 L124,853.2 M112.7,838 L112.7,840.6 M123.3,838 L123.3,840.6 M112.7,851.4 L112.7,854 M123.3,851.4 L123.3,854" stroke="#f0f0f0" stroke-width="1.4" fill="none"/><rect x="125.4" y="842.6" width="2.4" height="3" fill="#fff"/><path d="M126.6,838 L126.6,841.2 M126.6,847.4 L126.6,854" stroke="#f0f0f0" stroke-width="1.1"/><path d="M162.2,843.8 Q163.6,835.0 172,835.0 Q180.6,835.4 180.6,845.0 L180.6,847.4 L167.8,847.4 Q168.4,851.8 173.4,852.0 Q176.8,852.0 179.6,850.4 L179.6,854.8 Q176.4,856.4 172.4,856.4 Q162.4,856.0 162.6,847.0 Q163.6,841.4 169.4,839.6 Q167.6,841.1999999999999 167.6,843.4 L174.8,843.4 Q174.8,839.4 170.8,839.1999999999999 Q165.6,839.1999999999999 162.2,843.8 Z" fill="#1678d8"/><path d="M208.6,837.8 L216.6,837.8 L218.6,840.0 L231.6,840.0 L231.6,854.4 L208.6,854.4 Z" fill="#e8b84c"/><rect x="209.2" y="841.0" width="21.8" height="13.4" fill="#f8dc82"/><rect x="209.2" y="844.0" width="21.8" height="3.2" fill="#fbe8a4"/><path d="M213.0,854.4 L213.0,849.0 Q213.0,847.8 214.2,847.8 L226.2,847.8 Q227.4,847.8 227.4,849.0 L227.4,854.4 L224.0,854.4 L224.0,851.0 L216.4,851.0 L216.4,854.4 Z" fill="#3f9ee8"/><rect x="217.6" y="851.6" width="5.4" height="2.8" fill="#bfe89a"/><path d="M264,840.4 L264,838.4 A4.4,4.4 0 0 1 272.8,838.4 L272.8,840.4" fill="none" stroke="#f4f4f4" stroke-width="1.4"/><path d="M257,840.2 L280,840.2 L279.4,856.6 L257.6,856.6 Z" fill="#f6f6f6"/><rect x="263" y="843.4" width="5" height="5" fill="#e8492f"/><rect x="269" y="843.4" width="5" height="5" fill="#7cb82e"/><rect x="263" y="849.4" width="5" height="5" fill="#2e9ae0"/><rect x="269" y="849.4" width="5" height="5" fill="#f4b82a"/><path d="M305.8,841.2 L317.8,835.6 L329.8,841.2 L329.8,855.2 L305.8,855.2 Z" fill="#fafafa"/><path d="M307.40000000000003,842.0 L328.2,842.0 L320.2,846.2 L323.6,850.8000000000001 L316.2,846.0 Z" fill="#0a0a0c"/><path d="M363.0,835.0 L376.20000000000005,836.8000000000001 L375.20000000000005,847.6 L362.20000000000005,845.2 Z" fill="#dfe6ee"/><path d="M364.20000000000005,836.4 L375.0,837.8000000000001 L374.20000000000005,846.2 L363.5,844.2 Z" fill="#1a2ccc"/><path d="M365.6,837.2 L369.6,837.8000000000001 L371.6,844.6 L365.0,843.4 Z" fill="#4a66e8" opacity=".8"/><path d="M356.0,846.0 L360.6,842.2 L362.6,845.4 L375.0,847.8000000000001 L370.20000000000005,852.0 Z" fill="#c4ccd2"/><path d="M356.0,846.0 L370.20000000000005,852.0 L369.8,857.0 L355.8,851.6 Z" fill="#d8dde2"/><path d="M370.20000000000005,852.0 L375.0,847.8000000000001 L374.6,853.0 L369.8,857.0 Z" fill="#8c949c"/><path d="M357.6,848.2 L368.20000000000005,852.6" stroke="#6a7278" stroke-width="1"/><path d="M406,842.1999999999999 L417.4,837.8 L426.4,841.0 L415,846.0 Z" fill="#e4e4e4"/><path d="M406,842.1999999999999 L415,846.0 L415,848.4 L406,844.5999999999999 Z" fill="#a8a8a8"/><path d="M415,846.0 L426.4,841.0 L426.4,843.4 L415,848.4 Z" fill="#7c7c7c"/><path d="M405,847.4 L414.6,850.0 L414.6,857.1999999999999 L405,854.0 Z" fill="#d8d8d8"/><path d="M414.6,850.0 L420.6,847.1999999999999 L420.6,854.1999999999999 L414.6,857.1999999999999 Z" fill="#9a9a9a"/><ellipse cx="408.2" cy="851.4" rx="1.5" ry="2" fill="#4a4a4a"/><ellipse cx="412" cy="852.5999999999999" rx="1.5" ry="2" fill="#4a4a4a"/><circle cx="903.6" cy="840.4" r="2.7" fill="none" stroke="#f0f0f0" stroke-width="1.2"/><path d="M900,847 Q900.4,843.6 903.8,843.6 Q907.6,843.8 907.8,847.4" fill="none" stroke="#f0f0f0" stroke-width="1.2"/><circle cx="898.4" cy="844.6" r="2.5" fill="none" stroke="#f0f0f0" stroke-width="1.2"/><path d="M894.6,852 Q894.8,847.6 898.4,847.6 Q902,847.8 902.4,852" fill="none" stroke="#f0f0f0" stroke-width="1.2"/><path d="M931.2,849.4 L937.2,842.8 L943.2,849.4" fill="none" stroke="#f0f0f0" stroke-width="1.3"/><rect x="955.0" y="840.2" width="13" height="9.4" fill="none" stroke="#f0f0f0" stroke-width="1.2"/><rect x="953.2" y="841.6" width="3.6" height="3.4" fill="#0d0d0f" stroke="#f0f0f0" stroke-width="1"/><path d="M955.0,845.2 L955.0,852.2 L960.6,852.2" fill="none" stroke="#f0f0f0" stroke-width="1.2"/><path d="M964.0,846.6 L968.2,853.6 L959.8000000000001,853.6 Z" fill="#f2c418"/><rect x="963.6" y="849.0" width="0.9" height="2.4" fill="#222"/><rect x="963.6" y="852.0" width="0.9" height="0.9" fill="#222"/><path d="M977.8000000000001,843.8 L980.2,843.8 L983.8000000000001,840.1999999999999 L983.8000000000001,851.1999999999999 L980.2,847.5999999999999 L977.8000000000001,847.5999999999999 Z" fill="none" stroke="#f0f0f0" stroke-width="1.1"/><path d="M986.0,843.4 Q987.6,845.8 986.0,848.1999999999999 M988.2,841.4 Q991.0,845.8 988.2,850.1999999999999 M990.6,839.4 Q994.4000000000001,845.8 990.6,852.1999999999999" fill="none" stroke="#f0f0f0" stroke-width="1.1"/><path d="M1111.3,839.1 L1126.3,839.1 L1126.3,849.4 L1121.1999999999998,849.4 L1118.8,852.1999999999999 L1116.3999999999999,849.4 L1111.3,849.4 Z" fill="none" stroke="#f4f4f4" stroke-width="1.3"/><rect x="1146.5" y="826" width="1" height="38" fill="#5a5a5a"/></svg>
</div></body></html>
